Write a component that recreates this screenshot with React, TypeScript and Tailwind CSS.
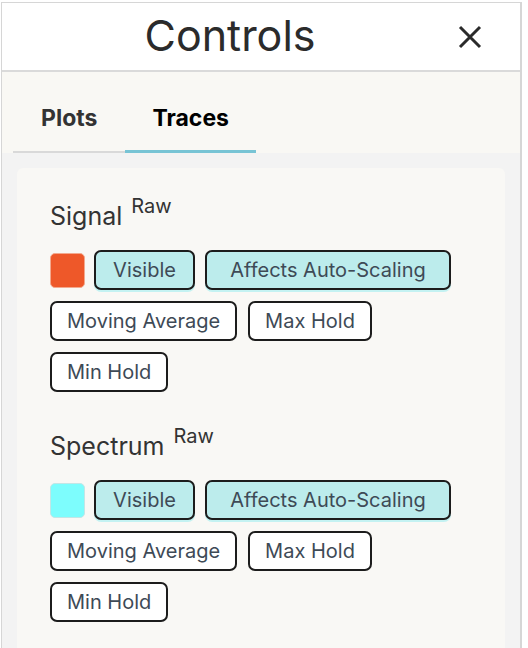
import React from "react";

type Trace = { name: string; color: string; edge: string };

const traces: Trace[] = [
  { name: "Signal", color: "#ee5829", edge: "#f3a98e" },
  { name: "Spectrum", color: "#7dfdfd", edge: "#c2e6e6" },
];

function Toggle({ label, on, w }: { label: string; on?: boolean; w?: string }) {
  return (
    <button
      className={
        "h-[40px] px-[15px] rounded-[7px] border-2 border-[#1c1c1c] text-[20px] leading-none text-[#3e4a56] " +
        (on ? "bg-[#bcecec] shadow-[0_2px_0_#c4f2f2] " : "bg-white ") +
        (w ?? "")
      }
    >
      {label}
    </button>
  );
}

function TraceBlock({ t }: { t: Trace }) {
  return (
    <div>
      <div className="h-[32px] text-[25px] leading-[32px] text-[#333]">
        {t.name}
        <span className="relative -top-[12px] ml-[9px] text-[20px] leading-none">Raw</span>
      </div>
      <div className="mt-[18px] flex flex-wrap gap-x-[10px] gap-y-[11px] w-[420px]">
        <div className="flex items-center gap-[9px]">
          <div
            className="w-[35px] h-[35px] rounded-[5px] border"
            style={{ backgroundColor: t.color, borderColor: t.edge }}
          />
          <Toggle label="Visible" on w="w-[101px]" />
        </div>
        <Toggle label="Affects Auto-Scaling" on w="w-[246px]" />
        <Toggle label="Moving Average" />
        <div className="ml-[1px]">
          <Toggle label="Max Hold" />
        </div>
        <Toggle label="Min Hold" />
      </div>
    </div>
  );
}

export default function App() {
  return (
    <div className="w-[528px] h-[648px] bg-white overflow-hidden pt-[2px] font-['Inter',sans-serif]">
      <div className="w-[521px] h-[700px] border-t border-l border-r-2 border-[#d6d6d6] ml-px flex flex-col">
        <div className="h-[69px] bg-white border-b-2 border-[#dadada] flex items-center">
          <div className="flex-1 text-center text-[43px] leading-none text-[#2b2b2b] pb-[3px]">Controls</div>
          <svg width="24" height="24" viewBox="0 0 24 24" className="mr-[38px]">
            <path d="M2 2 L22 22 M22 2 L2 22" stroke="#2a2a2a" strokeWidth="3" />
          </svg>
        </div>
        <div className="bg-[#f9f8f4] pl-[11px] pt-[32px] flex items-end">
          <div className="px-[28px] pb-[19px] border-b-2 border-[#d9d9d9] text-[23px] leading-[28px] font-bold text-[#333]">
            Plots
          </div>
          <div className="px-[27px] pb-[18px] border-b-[3px] border-[#78c4d5] text-[23px] leading-[28px] font-bold text-black">
            Traces
          </div>
        </div>
        <div className="flex-1 bg-[#f3f3f3] pt-[15px] pl-[15px] pr-[15px]">
          <div className="h-full bg-[#f9f8f5] rounded-[6px] pl-[33px] pt-[32px] flex flex-col gap-[38px]">
            {traces.map((t) => (
              <TraceBlock key={t.name} t={t} />
            ))}
          </div>
        </div>
      </div>
    </div>
  );
}
